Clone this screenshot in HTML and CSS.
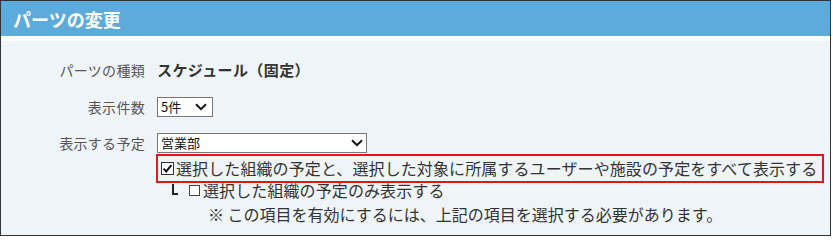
FILE: index.html
```html
<!DOCTYPE html>
<html lang="ja">
<head>
<meta charset="utf-8">
<title>パーツの変更</title>
<link rel="stylesheet" href="styles.css">
</head>
<body>
<div class="frame">
  <div class="header"><h1 class="title">パーツの変更</h1></div>
  <div class="content">
    <div class="row row-type">
      <div class="label">パーツの種類</div>
      <div class="value">スケジュール（固定）</div>
    </div>
    <div class="row row-count">
      <div class="label">表示件数</div>
      <div class="select select-small">
        <span class="select-text">5件</span>
        <svg class="chev" width="12" height="8" viewBox="0 0 12 8"><polyline points="1,1.2 6,6.2 11,1.2" fill="none" stroke="#111" stroke-width="2"/></svg>
      </div>
    </div>
    <div class="row row-target">
      <div class="label">表示する予定</div>
      <div class="field">
        <div class="select select-wide">
          <span class="select-text">営業部</span>
          <svg class="chev" width="12" height="8" viewBox="0 0 12 8"><polyline points="1,1.2 6,6.2 11,1.2" fill="none" stroke="#111" stroke-width="2"/></svg>
        </div>
        <div class="opt opt-main">
          <svg class="cb" width="13" height="13" viewBox="0 0 13 13"><rect x="0.5" y="0.5" width="12" height="12" fill="#fff" stroke="#333"/><polyline points="2.6,6.6 5.2,9.4 10.4,3.2" fill="none" stroke="#111" stroke-width="2"/></svg>
          <span>選択した組織の予定と、選択した対象に所属するユーザーや施設の予定をすべて表示する</span>
        </div>
        <div class="opt opt-sub">
          <span class="corner"></span>
          <span class="box"></span>
          <span>選択した組織の予定のみ表示する</span>
        </div>
        <div class="note">※ この項目を有効にするには、上記の項目を選択する必要があります。</div>
      </div>
    </div>
  </div>
</div>
</body>
</html>
```

FILE: styles.css
```css
html, body {
  margin: 0;
  padding: 0;
  background: #fff;
}
body {
  font-family: "Noto Sans CJK JP", "Noto Sans", sans-serif;
  color: #333;
}
.frame {
  width: 829px;
  height: 234px;
  border: 1px solid #333;
  display: flex;
  flex-direction: column;
  background: #eff4f8;
}
.header {
  height: 35px;
  background: #5dabdb;
  border-bottom: 5px solid #fff;
  display: flex;
  align-items: center;
  padding-left: 12px;
}
.title {
  margin: 0;
  font-size: 18px;
  font-weight: bold;
  color: #fff;
  line-height: 24px;
}
.content {
  flex: 1;
  padding-top: 18px;
  display: flex;
  flex-direction: column;
  gap: 16px;
}
.row {
  display: flex;
  align-items: center;
  gap: 12px;
}
.row-target {
  align-items: flex-start;
}
.label {
  width: 144px;
  text-align: right;
  font-size: 14px;
  line-height: 20px;
  color: #555;
  letter-spacing: 0.3px;
  flex: none;
}
.row-type {
  height: 22px;
}
.value {
  font-size: 15px;
  font-weight: bold;
  line-height: 22px;
  color: #333;
  letter-spacing: 0.4px;
}
.select {
  box-sizing: border-box;
  height: 20px;
  border: 1px solid #767676;
  background: #fff;
  display: flex;
  align-items: center;
  justify-content: space-between;
  padding: 0 5px 0 3px;
  font-size: 13px;
  color: #111;
}
.select-small {
  width: 56px;
}
.select-wide {
  width: 210px;
  padding-right: 3px;
}
.select-text {
  line-height: 18px;
}
.chev {
  display: block;
}
.field {
  display: flex;
  flex-direction: column;
}
.opt {
  display: flex;
  align-items: center;
  font-size: 16px;
  line-height: 22px;
  color: #333;
  letter-spacing: 0.1px;
}
.opt-main {
  position: relative;
  margin-top: 4px;
  padding-left: 4px;
}
.opt-main::after {
  content: "";
  position: absolute;
  left: -1px;
  top: -3px;
  width: 664px;
  height: 25px;
  border: 2px solid #e5141b;
}
.cb {
  display: block;
  margin-right: 2px;
}
.opt-sub {
  padding-left: 15px;
}
.corner {
  width: 4px;
  height: 9px;
  border-left: 2px solid #222;
  border-bottom: 2px solid #222;
  margin-right: 11px;
  margin-top: -2px;
}
.box {
  box-sizing: border-box;
  width: 11px;
  height: 11px;
  border: 1px solid #444;
  background: #fff;
  margin-right: 3px;
}
.note {
  margin-top: 2px;
  padding-left: 51px;
  font-size: 16px;
  line-height: 22px;
  color: #333;
}
```
